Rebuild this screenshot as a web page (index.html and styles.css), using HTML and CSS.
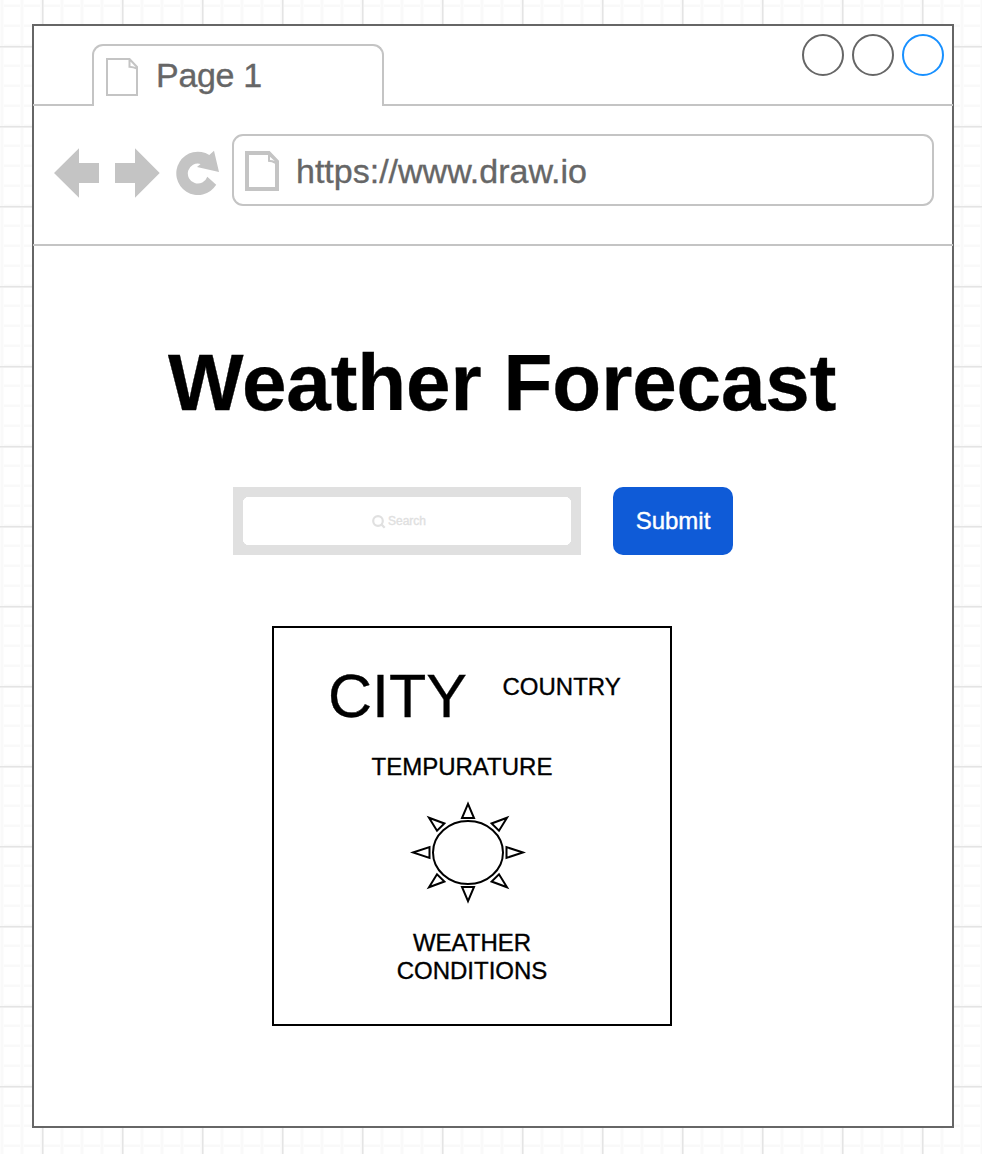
FILE: index.html
```html
<!DOCTYPE html>
<html lang="en">
<head>
<meta charset="utf-8">
<title>Weather Forecast</title>
<link rel="stylesheet" href="styles.css">
</head>
<body>
<div class="window">
  <header class="tabbar">
    <div class="tab">
      <svg class="tab-icon" width="32" height="38" viewBox="0 0 32 38"><path d="M1 1H23.5L31 9V37H1ZM23.5 1V8.7Q27.5 9 31 10.6"/></svg>
      <span>Page 1</span>
    </div>
    <div class="controls"><i class="dot"></i><i class="dot"></i><i class="dot active"></i></div>
  </header>
  <nav class="toolbar">
    <svg class="nav-icons" width="166" height="50" viewBox="54 148 166 50">
      <path d="M54 173L79 148.3V163H99V183H79V197.7Z"/>
      <path d="M159.7 173L135 148.3V163H115V183H135V197.7Z"/>
      <path d="M209.3 155L214 150.7L219 172L197 167L200.6 163.9A10 10 0 1 0 207.3 176.7L216.2 184.8A21.6 21.6 0 1 1 209.3 155Z"/>
    </svg>
    <div class="address">
      <svg class="address-icon" width="34" height="40" viewBox="0 0 34 40"><path fill-rule="evenodd" d="M0 0H24.7L34 9.7V40H0ZM4 4V36H30V12.7Q27 11 23 10.8V4ZM25 5.7V9Q27.5 9 29.7 10Z"/></svg>
      <span>https://www.draw.io</span>
    </div>
  </nav>
  <main class="content">
    <h1 class="title">Weather Forecast</h1>
    <div class="form">
      <div class="search">
        <svg class="search-icon" width="14" height="14" viewBox="0 0 14 14"><circle cx="6" cy="6" r="4.8"/><path d="M9.4 9.4L12.7 12.7"/></svg>
        <span>Search</span>
      </div>
      <button class="submit">Submit</button>
    </div>
    <section class="card">
      <div class="place"><span class="city">CITY</span><span class="country">COUNTRY</span></div>
      <div class="temperature">TEMPURATURE</div>
      <svg class="sun" width="116" height="104" viewBox="-58 -52.5 116 104">
        <ellipse rx="35" ry="31.5"/>
        <path d="M0 -48.6L-6 -34.5H6ZM0 48.6L-6 34.5H6Z"/>
        <path d="M55 0L38.5 -5.4V5.4ZM-55 0L-38.5 -5.4V5.4Z"/>
        <path d="M39 -34.8L23.6 -29L31 -21.8ZM-39 -34.8L-23.6 -29L-31 -21.8ZM39 34.8L23.6 29L31 21.8ZM-39 34.8L-23.6 29L-31 21.8Z"/>
      </svg>
      <div class="conditions">WEATHER<br>CONDITIONS</div>
    </section>
  </main>
</div>
</body>
</html>
```
FILE: styles.css
```css
* { box-sizing: border-box; }
body {
  margin: 0;
  height: 1154px;
  overflow: hidden;
  padding: 24px 28px 26px 32px;
  font-family: "Liberation Sans", Arial, sans-serif;
  -webkit-text-stroke: 0.35px currentColor;
  background-color: #fff;
  background-image:
    linear-gradient(90deg, #e4e4e4 1px, #efefef 1px, #efefef 2px, transparent 2px),
    linear-gradient(#e4e4e4 1px, #efefef 1px, #efefef 2px, transparent 2px),
    linear-gradient(90deg, #fcfcfc 1px, #f9f9f9 1px, #f9f9f9 3px, #fcfcfc 3px, #fcfcfc 4px, transparent 4px),
    linear-gradient(#fcfcfc 1px, #f9f9f9 1px, #f9f9f9 3px, transparent 3px);
  background-size: 80px 80px, 80px 80px, 20px 20px, 20px 20px;
  background-position: 42px 0, 0 46px, 0 0, 0 4px;
}
svg { display: block; flex: none; }
.window {
  width: 922px;
  height: 1104px;
  border: 2px solid #666;
  background: #fff;
}
.tabbar {
  display: flex;
  justify-content: space-between;
  height: 80px;
  margin: 0 -1px;
  padding: 8px 9px 0 59px;
  border-bottom: 2px solid #c4c4c4;
}
.tab {
  display: flex;
  width: 292px;
  height: 62px;
  margin-top: 10px;
  padding: 12px 0 0 12px;
  border: 2px solid #c4c4c4;
  border-bottom: 0;
  border-radius: 11px 11px 0 0;
  background: #fff;
  color: #666;
  font-size: 34px;
  line-height: 34px;
}
.tab span { margin-left: 18px; letter-spacing: -0.3px; }
.tab-icon { fill: none; stroke: #c4c4c4; stroke-width: 2; }
.controls { display: flex; gap: 8px; }
.dot {
  width: 42px;
  height: 42px;
  border: 2px solid #666;
  border-radius: 50%;
}
.dot.active { border-color: #1890ff; }
.toolbar {
  display: flex;
  height: 140px;
  margin: 0 -1px;
  padding: 28px 19px 38px 21px;
  border-bottom: 2px solid #c4c4c4;
}
.nav-icons { margin-top: 14px; fill: #c4c4c4; }
.address {
  display: flex;
  flex: 1;
  margin-left: 12px;
  padding: 15px 0 0 11px;
  border: 2px solid #c4c4c4;
  border-radius: 11px;
  color: #666;
  font-size: 34px;
  line-height: 40px;
}
.address span { margin-left: 17px; }
.address-icon { fill: #c4c4c4; }
.content { padding-top: 97px; }
.title {
  margin: 0 0 64px 134px;
  font-size: 80px;
  line-height: 80px;
  font-weight: 700;
  letter-spacing: -0.1px;
  white-space: nowrap;
}
.form { display: flex; gap: 32px; margin-left: 199px; }
.search {
  display: flex;
  align-items: center;
  justify-content: center;
  gap: 2px;
  width: 348px;
  height: 68px;
  padding: 1px 16px 0 0;
  border: 10px solid #e0e0e0;
  color: #e0e0e0;
  font-size: 12px;
  line-height: 15px;
  background:
    radial-gradient(circle at 6px 6px, #fff 6px, #e0e0e0 6.5px) 0 0 / 6px 6px no-repeat,
    radial-gradient(circle at 0 6px, #fff 6px, #e0e0e0 6.5px) 100% 0 / 6px 6px no-repeat,
    radial-gradient(circle at 6px 0, #fff 6px, #e0e0e0 6.5px) 0 100% / 6px 6px no-repeat,
    radial-gradient(circle at 0 0, #fff 6px, #e0e0e0 6.5px) 100% 100% / 6px 6px no-repeat,
    #fff;
}
.search-icon { fill: none; stroke: #e0e0e0; stroke-width: 2.2; }
.submit {
  width: 120px;
  height: 68px;
  padding: 0;
  border: 0;
  border-radius: 10px;
  background: #0f5bd7;
  color: #fff;
  font: 24px/28px "Liberation Sans", Arial, sans-serif;
  -webkit-text-stroke: 0.4px currentColor;
}
.card {
  width: 400px;
  height: 400px;
  margin: 71px 0 0 238px;
  padding-top: 38px;
  border: 2px solid #000;
  font-size: 24px;
  line-height: 24px;
}
.place { display: flex; margin-left: 54px; }
.city { width: 174.5px; font-size: 61px; line-height: 60px; }
.country { margin-top: 9px; }
.temperature { margin: 29px 0 21px 97.5px; }
.sun { margin-left: 136px; fill: none; stroke: #000; stroke-width: 2; }
.conditions { margin-top: 25px; text-align: center; line-height: 28px; }
```
